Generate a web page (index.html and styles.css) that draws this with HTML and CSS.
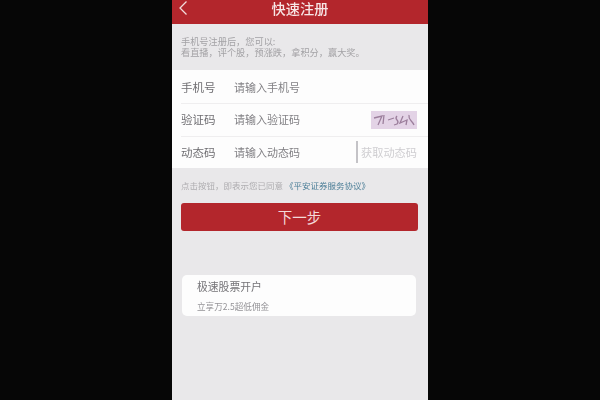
FILE: index.html
```html
<!DOCTYPE html>
<html lang="zh">
<head>
<meta charset="utf-8">
<title>快速注册</title>
<link rel="stylesheet" href="styles.css">
</head>
<body>
<main class="phone">
  <header class="topbar">
    <svg class="back" viewBox="0 0 10 16" width="10" height="16" aria-hidden="true"><path d="M8.5 1.5 L2 8 L8.5 14.5" fill="none" stroke="#f3dcdc" stroke-width="1.3"/></svg>
    <h1 class="title">快速注册</h1>
  </header>
  <section class="intro">
    <p>手机号注册后，您可以:</p>
    <p>看直播，评个股，预涨跌，拿积分，赢大奖。</p>
  </section>
  <section class="form">
    <div class="row">
      <span class="label">手机号</span>
      <span class="placeholder">请输入手机号</span>
    </div>
    <div class="row lifted">
      <span class="label">验证码</span>
      <span class="placeholder">请输入验证码</span>
      <svg class="captcha" viewBox="0 0 46 18" width="46" height="18" aria-hidden="true">
        <rect width="46" height="18" fill="#e3d3e6"/>
        <path d="M3 7 L11 5 L7 14 M13 4 L12 13 M17 9 L23 7 M26 5 C22 9 30 9 26 13 L23 14 M32 5 L29 12 L36 9 L35 14 M38 4 C37 9 41 9 43 14" fill="none" stroke="#9c7f9c" stroke-width="1.3"/>
      </svg>
    </div>
    <div class="row lifted">
      <span class="label">动态码</span>
      <span class="placeholder">请输入动态码</span>
      <span class="code">获取动态码</span>
    </div>
  </section>
  <p class="agree">点击按钮，即表示您已同意 <a class="link">《平安证券服务协议》</a></p>
  <div class="next">下一步</div>
  <section class="card">
    <div class="card-title">极速股票开户</div>
    <div class="card-sub">立享万2.5超低佣金</div>
  </section>
</main>
</body>
</html>
```
FILE: styles.css
```css
html, body {
  margin: 0;
  height: 400px;
  background: #060606;
  overflow: hidden;
}
body {
  font-family: "Noto Sans CJK SC", "Liberation Sans", sans-serif;
}
.phone {
  width: 256px;
  height: 400px;
  margin: 0 auto;
  background: #e9e8ea;
  display: flex;
  flex-direction: column;
}
.topbar {
  height: 24px;
  flex: none;
  background: #b3262c;
  position: relative;
  display: flex;
  justify-content: center;
  align-items: center;
}
.back {
  position: absolute;
  left: 6px;
  top: 0;
}
.title {
  margin: -8px 0 0;
  font-size: 14.2px;
  font-weight: 500;
  line-height: 16px;
  color: #f7e6e6;
  filter: blur(0.4px);
}
.intro {
  height: 46px;
  flex: none;
  box-sizing: border-box;
  padding: 12px 0 0 9px;
  filter: blur(0.6px);
}
.intro p {
  margin: 0;
  font-size: 9.2px;
  line-height: 11px;
  color: #a3a2a5;
}
.form {
  background: #fdfdfd;
  flex: none;
  height: 98px;
  display: grid;
  grid-template-rows: 33px 33px 32px;
}
.row {
  display: flex;
  align-items: center;
  margin-left: 9px;
  padding-right: 11px;
  border-top: 1px solid #efeeef;
  filter: blur(0.5px);
}
.row:first-child {
  border-top: 0;
}
.lifted {
  padding-bottom: 2px;
}
.label {
  width: 53px;
  flex: none;
  font-size: 11.5px;
  color: #6f6e72;
}
.placeholder {
  font-size: 11px;
  color: #828185;
  flex: 1;
}
.captcha {
  flex: none;
  margin-top: 2px;
  filter: blur(0.5px);
}
.code {
  flex: none;
  font-size: 11.2px;
  color: #cfced1;
  border-left: 2px solid #c4c3c7;
  padding-left: 3.5px;
  line-height: 22px;
}
.agree {
  margin: 11px 0 0 9px;
  height: 12px;
  font-size: 8.5px;
  line-height: 12px;
  color: #aeadb0;
  white-space: nowrap;
  filter: blur(0.5px);
}
.link {
  color: #4d7f98;
}
.next {
  margin: 12px 10px 0 9px;
  height: 28px;
  flex: none;
  border-radius: 3px;
  background: #b3262c;
  color: #f3d9d9;
  font-size: 14.5px;
  line-height: 28px;
  text-align: center;
}
.card {
  margin: 44px 12px 0 10px;
  height: 41px;
  flex: none;
  box-sizing: border-box;
  padding: 4px 0 0 15px;
  border-radius: 5px;
  background: #fdfdfd;
}
.card-title {
  font-size: 10.8px;
  line-height: 14px;
  color: #747377;
  filter: blur(0.4px);
}
.card-sub {
  margin-top: 7px;
  font-size: 8.6px;
  line-height: 12px;
  color: #949397;
  filter: blur(0.4px);
}
```
